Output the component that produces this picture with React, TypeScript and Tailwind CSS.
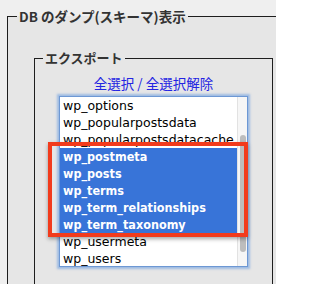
import React from "react";

const items: { name: string; sel: boolean }[] = [
  { name: "wp_options", sel: false },
  { name: "wp_popularpostsdata", sel: false },
  { name: "wp_popularpostsdatacache", sel: false },
  { name: "wp_postmeta", sel: true },
  { name: "wp_posts", sel: true },
  { name: "wp_terms", sel: true },
  { name: "wp_term_relationships", sel: true },
  { name: "wp_term_taxonomy", sel: true },
  { name: "wp_usermeta", sel: false },
  { name: "wp_users", sel: false },
];

export default function App() {
  return (
    <div className="relative w-[276px] h-[284px] overflow-hidden bg-[#efefef] pt-[8px] pl-[7px] font-['Noto_Sans_CJK_JP',sans-serif]">
      <fieldset className="w-[269px] h-[276px] border-t border-l border-r-0 border-b-0 border-[#1e1e1e] bg-[#e6e6e6] pl-[9px]">
        <legend className="px-[2px] text-[13.5px] leading-[16px] font-bold text-[#333]">
          DB のダンプ(スキーマ)表示
        </legend>
        <fieldset className="ml-[17px] mt-[26px] w-[239px] h-[240px] border-t border-l border-r border-b-0 border-[#1e1e1e] pl-[8px] pr-[8px]">
          <legend className="px-[2px] text-[13px] leading-[16px] font-bold text-[#333]">
            エクスポート
          </legend>
          <div className="mt-[9px] text-center text-[13.5px] leading-[17px] text-[#2424e2]">
            <span>全選択</span>
            <span> / </span>
            <span>全選択解除</span>
          </div>
          <div className="mx-auto mt-[4px] w-[189px] h-[171px] border border-[#6d98d4] bg-white shadow-[0_0_2px_2px_rgba(120,165,225,0.65)] flex overflow-hidden">
            <div className="flex-1 flex flex-col">
              {items.map((it) =>
                it.sel ? (
                  <div
                    key={it.name}
                    className="h-[17px] leading-[17px] pl-[3px] bg-[#3874d8] text-white text-[12.5px] font-bold font-['DejaVu_Sans_Condensed','DejaVu_Sans',sans-serif] whitespace-nowrap"
                  >
                    {it.name}
                  </div>
                ) : (
                  <div
                    key={it.name}
                    className="h-[17px] leading-[17px] pl-[3px] text-black text-[12.5px] font-['DejaVu_Sans',sans-serif] whitespace-nowrap"
                  >
                    {it.name}
                  </div>
                )
              )}
            </div>
            <div className="w-[10px] bg-[#f6f6f6] border-l border-[#e2e2e2] pt-[38px] pl-[2px]">
              <div className="w-[6px] h-[117px] rounded-full bg-[#bdbdbd]" />
            </div>
          </div>
        </fieldset>
      </fieldset>
      <div className="absolute left-[48px] top-[142px] w-[200px] h-[95px] border-4 border-[#f23b1c] shadow-[0_2px_4px_rgba(0,0,0,0.35)]" />
    </div>
  );
}
